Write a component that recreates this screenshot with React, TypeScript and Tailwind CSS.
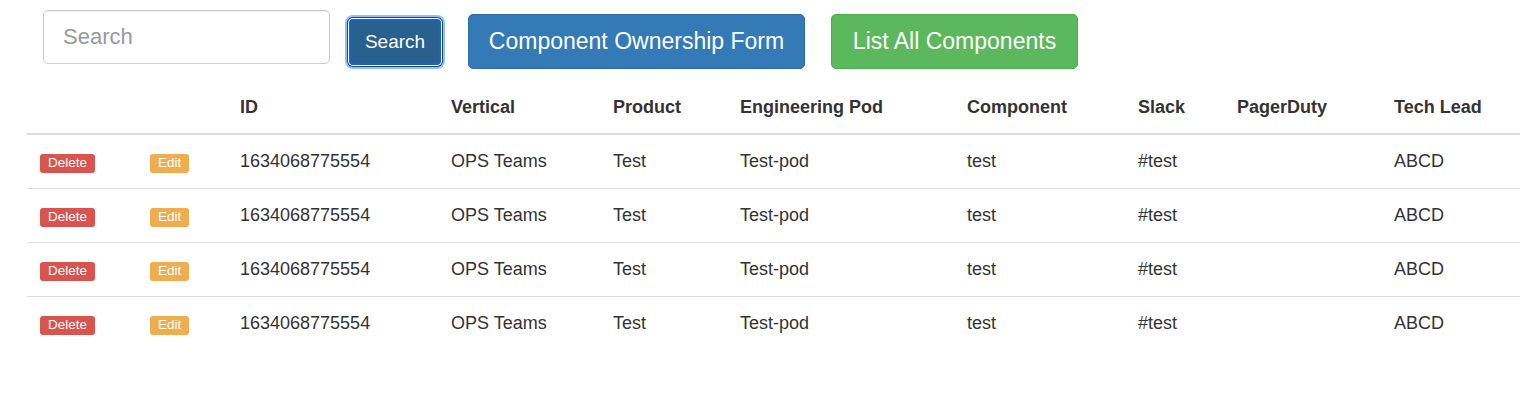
const columns = [
  { label: "", w: "w-[110px]" },
  { label: "", w: "w-[90px]" },
  { label: "ID", w: "w-[211px]" },
  { label: "Vertical", w: "w-[162px]" },
  { label: "Product", w: "w-[127px]" },
  { label: "Engineering Pod", w: "w-[227px]" },
  { label: "Component", w: "w-[171px]" },
  { label: "Slack", w: "w-[99px]" },
  { label: "PagerDuty", w: "w-[157px]" },
  { label: "Tech Lead", w: "" },
];

type Row = {
  id: string;
  vertical: string;
  product: string;
  pod: string;
  component: string;
  slack: string;
  pagerDuty: string;
  techLead: string;
};

const rows: Row[] = Array.from({ length: 4 }, () => ({
  id: "1634068775554",
  vertical: "OPS Teams",
  product: "Test",
  pod: "Test-pod",
  component: "test",
  slack: "#test",
  pagerDuty: "",
  techLead: "ABCD",
}));

export default function App() {
  return (
    <div
      className="w-[1520px] h-[410px] bg-white text-[#333] overflow-hidden"
      style={{ fontFamily: '"Liberation Sans", Arial, sans-serif' }}
    >
      {/* Top bar: search + actions */}
      <div className="flex items-start">
        <input
          placeholder="Search"
          className="ml-[43px] mt-[10px] w-[287px] h-[54px] rounded-[5px] border border-[#ccc] px-[19px] text-[22px] text-[#555] placeholder:text-[#999] outline-none shadow-[inset_0_1px_1px_rgba(0,0,0,0.075)]"
        />
        <button className="ml-[19px] mt-[19px] w-[92px] h-[46px] rounded-[4px] bg-[#286090] border-2 border-[#1b62c6] text-white text-[19px] shadow-[0_0_0_1px_#fff,0_0_0_2px_#1f4a70,0_0_0_4px_#8fc1f4]">
          Search
        </button>
        <button className="ml-[27px] mt-[14px] w-[337px] h-[55px] rounded-[5px] bg-[#337ab7] border border-[#2e6da4] text-white text-[23px]">
          Component Ownership Form
        </button>
        <button className="ml-[26px] mt-[14px] w-[247px] h-[55px] rounded-[5px] bg-[#5cb85c] border border-[#4cae4c] text-white text-[23px]">
          List All Components
        </button>
      </div>

      {/* Components table */}
      <table className="ml-[27px] mt-[13px] w-[1493px] table-fixed border-collapse text-[18px]">
        <thead>
          <tr>
            {columns.map((c, i) => (
              <th
                key={i}
                className={`${c.w} h-[52px] px-[13px] text-left align-middle font-bold border-b-2 border-[#ddd]`}
              >
                {c.label}
              </th>
            ))}
          </tr>
        </thead>
        <tbody>
          {rows.map((r, idx) => (
            <tr key={idx} className={idx > 0 ? "border-t border-[#ddd]" : ""}>
              <td className="h-[54px] px-[13px] align-middle">
                <span className="inline-block rounded-[3px] bg-[#d9534f] px-[8px] pt-[2px] pb-[3px] text-[13.5px] leading-[14px] text-white">
                  Delete
                </span>
              </td>
              <td className="px-[13px] align-middle">
                <span className="inline-block rounded-[3px] bg-[#f0ad4e] px-[8px] pt-[2px] pb-[3px] text-[13.5px] leading-[14px] text-white">
                  Edit
                </span>
              </td>
              <td className="px-[13px] align-middle">{r.id}</td>
              <td className="px-[13px] align-middle">{r.vertical}</td>
              <td className="px-[13px] align-middle">{r.product}</td>
              <td className="px-[13px] align-middle">{r.pod}</td>
              <td className="px-[13px] align-middle">{r.component}</td>
              <td className="px-[13px] align-middle">{r.slack}</td>
              <td className="px-[13px] align-middle">{r.pagerDuty}</td>
              <td className="px-[13px] align-middle">{r.techLead}</td>
            </tr>
          ))}
        </tbody>
      </table>
    </div>
  );
}
